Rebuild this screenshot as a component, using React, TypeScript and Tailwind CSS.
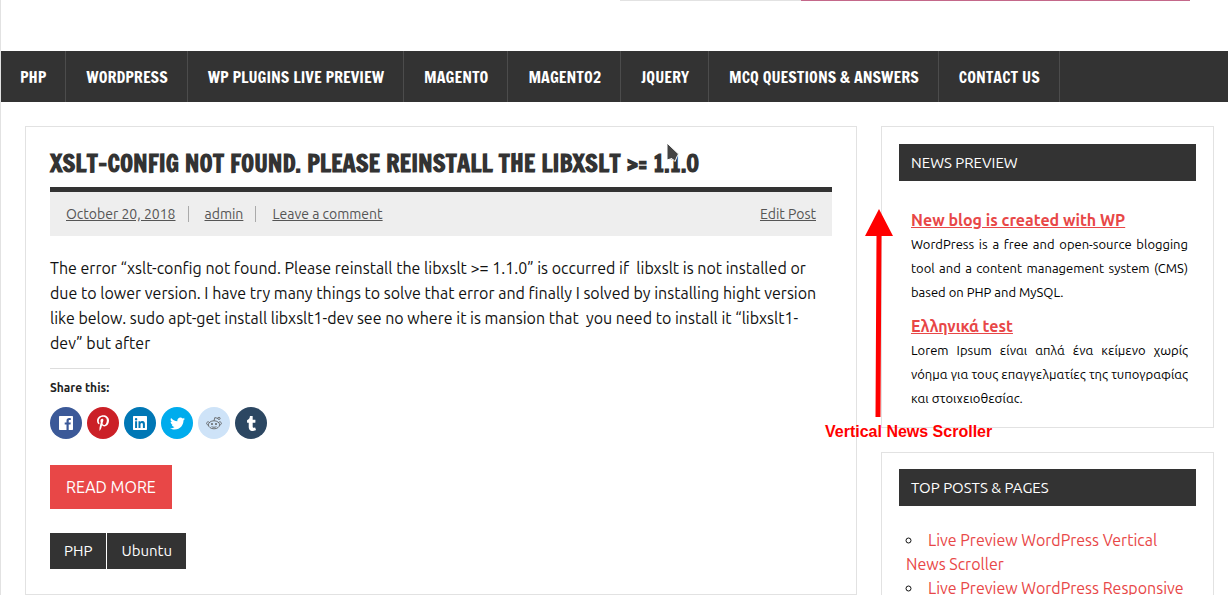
import { FaPinterestP, FaTumblr, FaTwitter } from "react-icons/fa";
import type { ReactNode } from "react";

const navItems = [
  "PHP",
  "WORDPRESS",
  "WP PLUGINS LIVE PREVIEW",
  "MAGENTO",
  "MAGENTO2",
  "JQUERY",
  "MCQ QUESTIONS & ANSWERS",
  "CONTACT US",
];

function FacebookIcon() {
  return (
    <svg viewBox="0 0 14 14" className="size-[14px]" fill="currentColor" aria-hidden="true">
      <path d="M.7 0h12.6a.7.7 0 0 1 .7.7v12.6a.7.7 0 0 1-.7.7H9.7V8.6h1.8l.3-2.1H9.7V5.1c0-.6.2-1 1-1h1.1V2.2c-.2 0-.9-.1-1.6-.1-1.6 0-2.7 1-2.7 2.8v1.6H5.7v2.1h1.8V14H.7a.7.7 0 0 1-.7-.7V.7A.7.7 0 0 1 .7 0z" />
    </svg>
  );
}

function LinkedinIcon() {
  return (
    <svg viewBox="0 0 14 14" className="size-[14px]" fill="currentColor" fillRule="evenodd" aria-hidden="true">
      <path d="M.7 0h12.6a.7.7 0 0 1 .7.7v12.6a.7.7 0 0 1-.7.7H.7a.7.7 0 0 1-.7-.7V.7A.7.7 0 0 1 .7 0zM2.100 5.300v6.600h2V5.300zM3.100 2a1.200 1.200 0 1 0 0 2.400 1.200 1.200 0 0 0 0-2.400zM5.500 5.300v6.600h2V8.600c0-.9.3-1.700 1.300-1.700s1.100.9 1.100 1.800v3.200h2V8.300c0-1.800-.4-3.200-2.500-3.200-1 0-1.600.5-1.900 1.100v-.9z" />
    </svg>
  );
}

function RedditIcon() {
  return (
    <svg viewBox="0 0 16 14" className="h-[14px] w-4" fill="none" stroke="currentColor" strokeWidth="0.8" aria-hidden="true">
      <ellipse cx="8" cy="8.8" rx="5.6" ry="4" />
      <path d="M3.4 6.4C2.4 5.2.6 6 .6 7.4c0 .8.6 1.4 1.7 1.7M12.6 6.4c1-1.2 2.8-.4 2.8 1 0 .8-.6 1.4-1.7 1.7M8 4.8l.8-3.2 3.2.8M5.6 10.6c1.4.9 3.4.9 4.8 0" />
      <circle cx="13" cy="2.4" r="1.1" />
      <circle cx="6" cy="8" r=".6" fill="currentColor" />
      <circle cx="10" cy="8" r=".6" fill="currentColor" />
    </svg>
  );
}

const shares = [
  { name: "Facebook", style: "bg-[#3b5998] text-white", icon: <FacebookIcon /> },
  { name: "Pinterest", style: "bg-[#cb2027] text-white", icon: <FaPinterestP size={16} /> },
  { name: "LinkedIn", style: "bg-[#0077b5] text-white", icon: <LinkedinIcon /> },
  { name: "Twitter", style: "bg-[#00aced] text-white", icon: <FaTwitter size={15} /> },
  { name: "Reddit", style: "bg-[#cee3f8] text-[#555555]", icon: <RedditIcon /> },
  { name: "Tumblr", style: "bg-[#2c4762] text-white", icon: <FaTumblr size={15} /> },
];

function Widget({ title, children }: { title: string; children: ReactNode }) {
  return (
    <section className="border border-[#e2e2e2] px-[17px] pt-4 first:pt-[17px]">
      <h2 className="bg-[#333333] px-3 text-[15px] leading-[37px] text-white">{title}</h2>
      {children}
    </section>
  );
}

function NewsItem({ title, children }: { title: string; children: ReactNode }) {
  return (
    <article className="mb-[10px]">
      <h3 className="text-base leading-6 font-bold">
        <a href="#" className="text-[#e84747] underline">{title}</a>
      </h3>
      <p className="text-justify text-[13px] leading-6 text-black">{children}</p>
    </article>
  );
}

export default function App() {
  return (
    <div className="h-screen overflow-hidden border-l border-[#e2e2e2] bg-white font-['Ubuntu','Noto_Sans',sans-serif] text-[#111111]">
      <header className="flex h-[51px] justify-end pr-[38px]">
        <div className="h-px w-[181px] bg-[#e2e2e2]" />
        <div className="h-px w-[389px] bg-[#c4688a]" />
      </header>

      <nav className="flex h-[51px] bg-[#333333] font-['Francois_One','Open_Sans_Condensed','Roboto_Condensed',sans-serif]">
        {navItems.map((label) => (
          <a
            key={label}
            href="#"
            className="flex shrink-0 items-center border-r border-[#4c4c4c] pr-[19px] pl-5 text-base whitespace-nowrap text-white first:pl-[19px]"
          >
            {label}
          </a>
        ))}
      </nav>

      <div className="flex items-start gap-6 pt-6 pr-[14px] pl-6">
        <main className="min-w-0 flex-1 border border-[#e2e2e2] px-6 pb-[25px]">
          <h1 className="flex h-[65px] items-center border-b-5 border-[#333333] pt-3 font-['Francois_One','Open_Sans_Condensed','Roboto_Condensed',sans-serif] text-2xl font-bold whitespace-nowrap text-[#333333]">
            XSLT-CONFIG NOT FOUND. PLEASE REINSTALL THE LIBXSLT &gt;= 1.1.0
          </h1>
          <div className="flex h-11 items-center bg-[#eeeeee] px-4 text-sm leading-4 text-[#555555]">
            <a href="#" className="underline">October 20, 2018</a>
            <a href="#" className="ml-3 border-l border-[#aaaaaa] pl-4 underline">admin</a>
            <a href="#" className="ml-3 border-l border-[#aaaaaa] pl-4 underline">Leave a comment</a>
            <a href="#" className="ml-auto underline">Edit Post</a>
          </div>
          <p className="mt-5 text-base leading-[25px]">
            The error “xslt-config not found. Please reinstall the libxslt &gt;= 1.1.0” is occurred if&nbsp; libxslt is not
            installed or due to lower version. I have try many things to solve that error and finally I solved by installing
            hight version like below. sudo apt-get install libxslt1-dev see no where it is mansion that&nbsp; you need to
            install it “libxslt1-
            <br />
            dev” but after
          </p>
          <div className="mt-3 h-px w-[60px] bg-[#dddddd]" />
          <h3 className="mt-[11px] text-xs leading-4 font-bold text-[#222222]">Share this:</h3>
          <ul className="mt-[11px] flex gap-[5px]">
            {shares.map((share) => (
              <li key={share.name}>
                <a href="#" aria-label={share.name} className={`${share.style} flex size-8 items-center justify-center rounded-full`}>
                  {share.icon}
                </a>
              </li>
            ))}
          </ul>
          <a href="#" className="mt-[26px] inline-block bg-[#e84747] px-4 text-base leading-[44px] text-white">
            READ MORE
          </a>
          <div className="mt-6 flex gap-px text-[15px] leading-9 text-white">
            <a href="#" className="bg-[#333333] px-[14px]">PHP</a>
            <a href="#" className="bg-[#333333] px-[14px]">Ubuntu</a>
          </div>
        </main>

        <aside className="relative flex w-[333px] shrink-0 flex-col gap-6">
          <Widget title="NEWS PREVIEW">
            <div className="mt-[27px] mr-2 mb-6 ml-3 h-[195px] overflow-hidden">
              <NewsItem title="New blog is created with WP">
                WordPress is a free and open-source blogging tool and a content management system (CMS) based on PHP and MySQL.
              </NewsItem>
              <NewsItem title="Ελληνικά test">
                Lorem Ipsum είναι απλά ένα κείμενο χωρίς νόημα για τους επαγγελματίες της τυπογραφίας και στοιχειοθεσίας.
              </NewsItem>
            </div>
          </Widget>
          <Widget title="TOP POSTS & PAGES">
            <ul className="mt-[22px] ml-[7px] list-inside list-[circle] text-base leading-6">
              <li><a href="#" className="text-[#e84747]">Live Preview WordPress Vertical News Scroller</a></li>
              <li><a href="#" className="text-[#e84747]">Live Preview WordPress Responsive</a></li>
            </ul>
          </Widget>

          <svg viewBox="0 0 28 208" className="absolute top-[83px] -left-4 h-[208px] w-7" aria-hidden="true">
            <path d="M14 0L28 27H16.5L15.5 208H10.5L11.5 27H0z" fill="#ff0000" />
          </svg>
          <p className="absolute top-[296px] -left-14 font-['Liberation_Sans',sans-serif] text-base leading-5 font-bold whitespace-nowrap text-[#ff0000]">
            Vertical News Scroller
          </p>
        </aside>
      </div>

      <svg viewBox="0 0 14 22" className="absolute top-[142px] left-[666px] h-[22px] w-[14px]" aria-hidden="true">
        <path d="M1 1v17l5-1.500 3 3 2.500-6L12.500 12z" fill="#444444" stroke="#ffffff" />
      </svg>
    </div>
  );
}
